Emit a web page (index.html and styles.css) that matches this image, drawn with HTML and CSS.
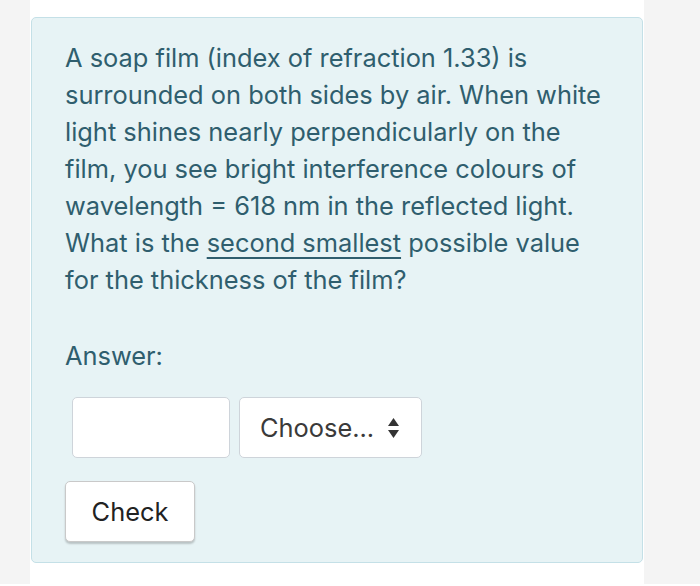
FILE: index.html
```html
<!DOCTYPE html>
<html>
<head>
<meta charset="utf-8">
<link rel="stylesheet" href="styles.css">
</head>
<body>
<div class="page">
  <div class="side side-left"></div>
  <main class="main">
    <section class="formulation">
      <p class="qtext">A soap film (index of refraction 1.33) is surrounded on both sides by air. When white light shines nearly perpendicularly on the film, you see bright interference colours of wavelength = 618 nm in the reflected light. What is the <u>second smallest</u> possible value for the thickness of the film?</p>
      <div class="answer-label">Answer:</div>
      <div class="answer-row">
        <div class="input-box"></div>
        <div class="select-box">
          <span>Choose...</span>
          <svg class="arrows" width="11" height="20" viewBox="0 0 11 20"><path d="M5.5 0 L11 8 L0 8 Z" fill="#333"/><path d="M0 12 L11 12 L5.5 20 Z" fill="#333"/></svg>
        </div>
      </div>
      <button class="check-btn">Check</button>
    </section>
  </main>
  <div class="side side-right"></div>
</div>
</body>
</html>
```

FILE: styles.css
```css
html, body {
  margin: 0;
  padding: 0;
  background: #ffffff;
}
.page {
  display: flex;
  height: 584px;
  width: 700px;
}
.side {
  background: #f4f4f4;
}
.side-left {
  width: 30px;
}
.side-right {
  width: 56px;
}
.main {
  width: 614px;
  background: #ffffff;
  padding-top: 17px;
  padding-left: 1px;
  box-sizing: border-box;
}
.formulation {
  width: 612px;
  height: 546px;
  box-sizing: border-box;
  background: #e7f3f5;
  border: 1px solid #c4e0e7;
  border-radius: 5px;
  padding: 21px 32px 0 33px;
  color: #2f5e6e;
  font-family: Inter, "Liberation Sans", sans-serif;
  font-size: 25.4px;
}
.qtext {
  margin: 0;
  line-height: 37px;
}
.qtext u {
  text-decoration-thickness: 1.5px;
  text-underline-offset: 5px;
}
.answer-label {
  margin-top: 39px;
  line-height: 37px;
}
.answer-row {
  display: flex;
  gap: 9px;
  margin-top: 23px;
  margin-left: 7px;
}
.input-box {
  width: 158px;
  height: 61px;
  box-sizing: border-box;
  background: #fff;
  border: 1px solid #ced4da;
  border-radius: 5px;
}
.select-box {
  width: 183px;
  height: 61px;
  box-sizing: border-box;
  background: #fff;
  border: 1px solid #ced4da;
  border-radius: 5px;
  display: flex;
  align-items: center;
  padding-left: 20px;
  gap: 14px;
  color: #3a3a3a;
}
.check-btn {
  display: block;
  margin-top: 23px;
  width: 130px;
  height: 61px;
  background: #fff;
  border: 1px solid #c9c9c9;
  border-radius: 5px;
  box-shadow: 0 2px 2px rgba(0,0,0,0.2);
  font-family: Inter, "Liberation Sans", sans-serif;
  font-size: 25.4px;
  color: #222;
  padding: 0;
}
```
